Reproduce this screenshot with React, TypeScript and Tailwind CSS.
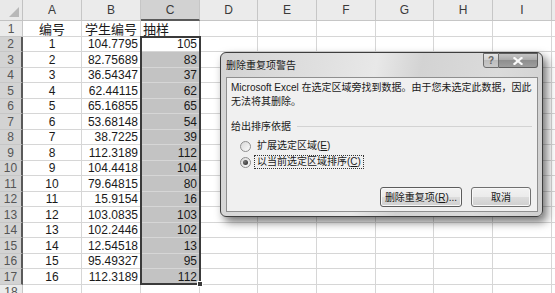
import React from 'react';

const colW = ['w-[23px]', 'w-[59px]', 'w-[59px]', 'w-[59px]', 'w-[58px]', 'w-[59px]', 'w-[59px]', 'w-[58px]', 'w-[59px]', 'w-[59px]', 'w-[59px]'];
const letters = ['', 'A', 'B', 'C', 'D', 'E', 'F', 'G', 'H', 'I', ''];

const data: [number, string, number][] = [
  [1, '104.7795', 105],
  [2, '82.75689', 83],
  [3, '36.54347', 37],
  [4, '62.44115', 62],
  [5, '65.16855', 65],
  [6, '53.68148', 54],
  [7, '38.7225', 39],
  [8, '112.3189', 112],
  [9, '104.4418', 104],
  [10, '79.64815', 80],
  [11, '15.9154', 16],
  [12, '103.0835', 103],
  [13, '102.2446', 102],
  [14, '12.54518', 13],
  [15, '95.49327', 95],
  [16, '112.3189', 112],
];

const rowH = (r: number) => (r === 0 ? 'h-[21px]' : r % 2 === 1 ? 'h-[16px]' : 'h-[15px]');

const HeaderRow: React.FC = () => (
  <div className="flex h-[21px]">
    {colW.map((w, c) => {
      if (c === 0) {
        return (
          <div key={c} className={`${w} shrink-0 h-full flex items-end justify-end p-[3px] bg-[#e9e9e9] border-r border-b border-[#c2c2c2]`}>
            <svg width="10" height="10" viewBox="0 0 10 10">
              <polygon points="10,0 10,10 0,10" fill="#b8b8b8" />
            </svg>
          </div>
        );
      }
      const sel = c === 3;
      return (
        <div
          key={c}
          className={`${w} shrink-0 h-full flex items-center justify-center text-[12px] text-[#3a3a3a] border-r border-[#c6c6c6] ${sel ? 'bg-[#d2d2d2] border-b-2 border-b-[#5a5a5a]' : 'bg-[#ebebeb] border-b border-b-[#c6c6c6]'}`}
        >
          {letters[c]}
        </div>
      );
    })}
  </div>
);

const SheetRow: React.FC<{ r: number }> = ({ r }) => {
  const d = r >= 2 && r <= 17 ? data[r - 2] : null;
  const selRow = r >= 2 && r <= 17;
  return (
    <div className={`flex ${rowH(r)}`}>
      {colW.map((w, c) => {
        if (c === 0) {
          return (
            <div
              key={c}
              className={`${w} shrink-0 h-full flex items-center justify-center text-[12px] text-[#555] border-b border-[#c6c6c6] ${selRow ? 'bg-[#d3d3d3] border-r-2 border-r-[#5a5a5a]' : 'bg-[#ebebeb] border-r border-r-[#c6c6c6]'}`}
            >
              {r}
            </div>
          );
        }
        const shaded = c === 3 && r >= 3 && r <= 17;
        let content: React.ReactNode = null;
        let align = 'justify-end pr-[2px]';
        if (r === 1) {
          const heads = ['', '编号', '学生编号', '抽样'];
          content = heads[c] ? <span className="text-[13px] font-['Noto_Sans_CJK_SC',sans-serif]">{heads[c]}</span> : null;
          align = c === 3 ? 'justify-start pl-[2px]' : 'justify-center';
        } else if (d) {
          if (c === 1) {
            content = d[0];
            align = 'justify-center';
          } else if (c === 2) content = d[1];
          else if (c === 3) content = d[2];
        }
        return (
          <div
            key={c}
            className={`${w} shrink-0 h-full flex items-center ${align} text-[12px] text-[#1a1a1a] leading-none border-r border-b border-[#d6d6d6] ${shaded ? 'bg-[#c3c3c3]' : 'bg-white'}`}
          >
            {content}
          </div>
        );
      })}
    </div>
  );
};

const Radio: React.FC<{ checked?: boolean }> = ({ checked }) => (
  <div className="w-[11px] h-[11px] rounded-full border border-[#8e8e8e] bg-[linear-gradient(135deg,#d8d8d8,#fbfbfb)] flex items-center justify-center shrink-0">
    {checked && <div className="w-[5px] h-[5px] rounded-full bg-[radial-gradient(circle_at_35%_35%,#777,#222)]" />}
  </div>
);

const Dialog: React.FC = () => (
  <div className="absolute left-[220px] top-[52px] w-[323px] h-[165px] rounded-[6px] border border-[#3e3e3e] bg-[linear-gradient(100deg,#d3d3d3_0%,#e0e0e0_30%,#e8e8e8_45%,#d3d3d3_58%,#dbdbdb_80%,#d0d0d0_100%)] shadow-[4px_5px_10px_rgba(0,0,0,0.55)] flex flex-col font-['Liberation_Sans','Noto_Sans_CJK_SC',sans-serif] text-[10px] text-[#1a1a1a]">
    <div className="h-[24px] relative flex items-center pl-[5px] shrink-0">
      <span>删除重复项警告</span>
      <div className="absolute right-[4px] top-0 flex">
        <div className="w-[16px] h-[15px] border border-[#6e6e6e] rounded-bl-[3px] bg-[linear-gradient(#e6e6e6,#cfcfcf_50%,#bdbdbd_50%,#cacaca)] flex items-center justify-center text-[10px] font-bold text-[#666]">
          ?
        </div>
        <div className="w-[39px] h-[15px] border border-l-0 border-[#5e5e5e] rounded-br-[3px] bg-[linear-gradient(#c4c4c4,#a8a8a8_50%,#8e8e8e_50%,#9e9e9e)] flex items-center justify-center">
          <svg width="10" height="8" viewBox="0 0 10 8">
            <path d="M1.5 1 L8.5 7 M8.5 1 L1.5 7" stroke="#fafafa" strokeWidth="2.2" strokeLinecap="square" />
          </svg>
        </div>
      </div>
    </div>
    <div className="mx-[5px] mr-[4px] mb-[4px] flex-1 border border-[#8f8f8f] bg-[#f0f0f0] flex flex-col pt-[3px] pl-[4px] pr-[5px] pb-[4px]">
      <p className="leading-[14px]">
        Microsoft Excel 在选定区域旁找到数据。由于您未选定此数据，因此
        <br />
        无法将其删除。
      </p>
      <div className="flex items-center mt-[10px] h-[14px]">
        <span>给出排序依据</span>
        <div className="flex-1 h-px bg-[#d3d3d3] ml-[6px]" />
      </div>
      <div className="mt-[5px] pl-[9px] flex flex-col">
        <div className="h-[16px] flex items-center">
          <Radio />
          <span className="ml-[3px] px-[2px] border border-transparent leading-[12px]">
            扩展选定区域(<span className="underline">E</span>)
          </span>
        </div>
        <div className="h-[16px] flex items-center">
          <Radio checked />
          <span className="ml-[3px] px-[2px] border border-dotted border-[#333] leading-[12px]">
            以当前选定区域排序(<span className="underline">C</span>)
          </span>
        </div>
      </div>
      <div className="mt-auto flex justify-end gap-[9px] pr-[1px]">
        <div className="w-[82px] h-[20px] rounded-[3px] border border-[#5c5c5c] shadow-[inset_0_0_0_1px_#f8f8f8] bg-[linear-gradient(#f2f2f2,#ebebeb_50%,#dddddd_50%,#cfcfcf)] flex items-center justify-center">
          删除重复项(<span className="underline">R</span>)...
        </div>
        <div className="w-[60px] h-[20px] rounded-[3px] border border-[#707070] shadow-[inset_0_0_0_1px_#f8f8f8] bg-[linear-gradient(#f2f2f2,#ebebeb_50%,#dddddd_50%,#cfcfcf)] flex items-center justify-center">
          取消
        </div>
      </div>
    </div>
  </div>
);

const App: React.FC = () => {
  const rows = Array.from({ length: 18 }, (_, i) => i + 1);
  return (
    <div className="relative w-[555px] h-[293px] overflow-hidden bg-white font-['Liberation_Sans','Noto_Sans_CJK_SC',sans-serif]">
      <HeaderRow />
      {rows.map((r) => (
        <SheetRow key={r} r={r} />
      ))}
      {/* selection C2:C17 */}
      <div className="absolute left-[140px] top-[36px] w-[61px] h-[249px] border-2 border-[#3a3a3a]">
        <div className="absolute right-[-4px] bottom-[-4px] w-[6px] h-[6px] bg-[#3a3a3a] border border-white" />
      </div>
      <Dialog />
    </div>
  );
};

export default App;
